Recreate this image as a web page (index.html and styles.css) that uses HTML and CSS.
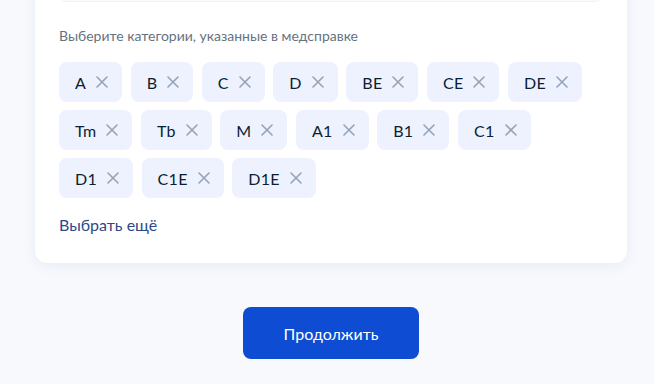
FILE: index.html
```html
<!DOCTYPE html>
<html>
<head>
    <title>Категории медсправки</title>
    <link rel="stylesheet" href="styles.css">
</head>
<body>
    <div class="page">
        <div class="card">
            <div class="field"></div>
            <div class="hint">Выберите категории, указанные в медсправке</div>
            <div class="chips">
                <span class="chip">A<span class="chip-x"></span></span>
                <span class="chip">B<span class="chip-x"></span></span>
                <span class="chip">C<span class="chip-x"></span></span>
                <span class="chip">D<span class="chip-x"></span></span>
                <span class="chip">BE<span class="chip-x"></span></span>
                <span class="chip">CE<span class="chip-x"></span></span>
                <span class="chip">DE<span class="chip-x"></span></span>
                <span class="chip">Tm<span class="chip-x"></span></span>
                <span class="chip">Tb<span class="chip-x"></span></span>
                <span class="chip">M<span class="chip-x"></span></span>
                <span class="chip">A1<span class="chip-x"></span></span>
                <span class="chip">B1<span class="chip-x"></span></span>
                <span class="chip">C1<span class="chip-x"></span></span>
                <span class="chip">D1<span class="chip-x"></span></span>
                <span class="chip">C1E<span class="chip-x"></span></span>
                <span class="chip">D1E<span class="chip-x"></span></span>
            </div>
            <a class="more" href="#">Выбрать ещё</a>
        </div>
        <div class="actions">
            <button class="next-btn">Продолжить</button>
        </div>
    </div>

    <script>
        // крестик в каждом чипе
        const cross = '<svg width="12" height="12" viewBox="0 0 12 12"><path d="M1 1L11 11M11 1L1 11" stroke="#96a3b7" stroke-width="1.6" stroke-linecap="round"/></svg>';
        document.querySelectorAll('.chip-x').forEach(el => {
            el.innerHTML = cross;
        });
    </script>
</body>
</html>
```

FILE: styles.css
```css
body {
    margin: 0;
    background: #f7f9fd;
    font-family: Lato, "Noto Sans", sans-serif;
    color: #0b1f33;
    overflow: hidden;
}
.page {
    width: 592px;
    margin-left: 35px;
}
.card {
    margin-top: -47px;
    background: #fff;
    border-radius: 0 0 12px 12px;
    padding: 0 24px 26px;
    box-shadow: 0 2px 14px rgba(94, 120, 168, 0.11);
}
.field {
    height: 48px;
    background: #f9fafb;
    border-radius: 0 0 8px 8px;
    border-bottom: 1px solid #f0f2f5;
}
.hint {
    margin-top: 24px;
    font-size: 14px;
    line-height: 20px;
    color: #66727f;
}
.chips {
    display: flex;
    flex-wrap: wrap;
    gap: 8px 8.5px;
    margin-top: 16px;
}
.chip {
    display: flex;
    align-items: center;
    gap: 10px;
    height: 40px;
    padding: 0 14px 0 16px;
    background: #edf2fe;
    border-radius: 8px;
    font-size: 16px;
    letter-spacing: 0.3px;
}
.chip-x {
    display: flex;
    width: 12px;
    height: 12px;
}
.more {
    display: block;
    margin-top: 15px;
    font-size: 16px;
    line-height: 24px;
    color: #2c4a86;
    text-decoration: none;
}
.actions {
    display: flex;
    justify-content: center;
    padding-top: 44px;
}
.next-btn {
    width: 176px;
    height: 52px;
    border: none;
    border-radius: 8px;
    background: #0d4cd3;
    color: #fff;
    font-family: Lato, "Noto Sans", sans-serif;
    font-size: 16px;
}
```
